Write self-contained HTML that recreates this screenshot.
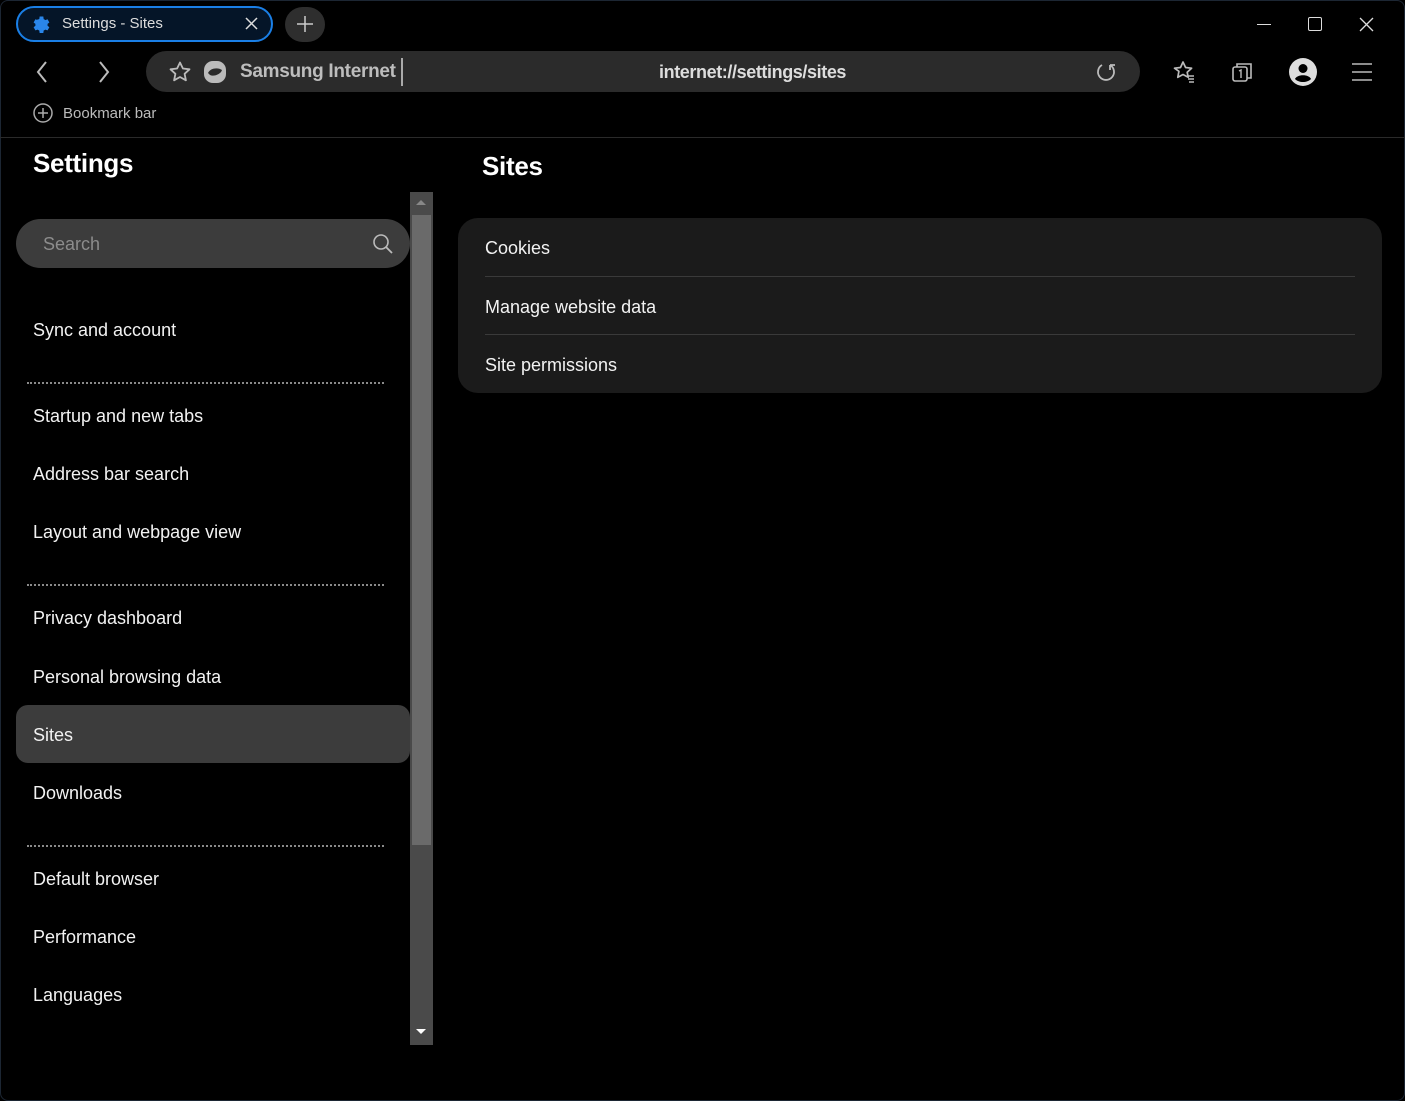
<!DOCTYPE html>
<html><head><meta charset="utf-8"><style>
*{margin:0;padding:0;box-sizing:border-box}
body{width:1405px;height:1101px;background:#000;overflow:hidden;font-family:"Liberation Sans",sans-serif;color:#fff;position:relative}
.a{position:absolute}
.win{position:absolute;left:0;top:0;width:1405px;height:1101px;border:1px solid #1c2633;border-radius:8px}
.item{position:absolute;left:33px;font-size:18px;color:#f2f2f2;line-height:20px}
.dot{position:absolute;left:27px;width:357px;border-top:2px dotted #8a8a8a}
.ci{position:absolute;left:485px;font-size:18px;color:#f2f2f2}
</style></head><body>
<div class="win"></div>
<!-- tab -->
<div class="a" style="left:16px;top:6px;width:257px;height:36px;border:2px solid #1a7fe6;border-radius:18px;background:#051528"></div>
<svg class="a" style="left:30px;top:14px" width="20" height="20" viewBox="0 0 24 24"><path fill="#2a86ea" d="M12 8a4 4 0 100 8 4 4 0 000-8zm9.4 5.1l2-1.6-2-3.5-2.4.9a8 8 0 00-1.8-1L16.8 5h-4l-.4 2.9a8 8 0 00-1.8 1l-2.4-.9-2 3.5 2 1.6a8 8 0 000 2l-2 1.6 2 3.5 2.4-.9a8 8 0 001.8 1l.4 2.7h4l.4-2.7a8 8 0 001.8-1l2.4.9 2-3.5-2-1.6a8 8 0 000-2z" transform="translate(-2.5 -2.5) scale(1.1)"/></svg>
<div class="a" style="left:62px;top:15px;font-size:15px;color:#ddd">Settings - Sites</div>
<svg class="a" style="left:245px;top:17px" width="13" height="13"><path d="M1 1L12 12M12 1L1 12" stroke="#ddd" stroke-width="1.5"/></svg>
<div class="a" style="left:285px;top:7px;width:40px;height:35px;border-radius:18px;background:#2e2e2e"></div>
<svg class="a" style="left:297px;top:16px" width="16" height="16"><path d="M8 0v16M0 8h16" stroke="#ccc" stroke-width="1.5"/></svg>
<!-- window controls -->
<div class="a" style="left:1257px;top:24px;width:14px;border-top:1px solid #ddd"></div>
<div class="a" style="left:1308px;top:17px;width:14px;height:14px;border:1.5px solid #ddd;border-radius:2px"></div>
<svg class="a" style="left:1359px;top:17px" width="15" height="15"><path d="M1 1L14 14M14 1L1 14" stroke="#ddd" stroke-width="1.3"/></svg>
<!-- nav -->
<svg class="a" style="left:34px;top:60px" width="16" height="24"><path d="M12 2L4 12l8 10" stroke="#bbb" fill="none" stroke-width="2"/></svg>
<svg class="a" style="left:96px;top:60px" width="16" height="24"><path d="M4 2l8 10-8 10" stroke="#bbb" fill="none" stroke-width="2"/></svg>
<div class="a" style="left:146px;top:51px;width:994px;height:41px;border-radius:21px;background:#2b2b2b"></div>
<svg class="a" style="left:168px;top:60px" width="24" height="24" viewBox="0 0 24 24"><path d="M12 2.5l2.9 6 6.6.8-4.9 4.5 1.3 6.5L12 17l-5.9 3.3 1.3-6.5L2.5 9.3l6.6-.8z" fill="none" stroke="#bbb" stroke-width="1.8" stroke-linejoin="round"/></svg>
<svg class="a" style="left:203px;top:60px" width="24" height="24" viewBox="0 0 24 24"><rect x="1" y="1" width="22" height="22" rx="9" fill="#bbb"/><path d="M5 13c2-5 10-6 14-3-1 4-8 7-12 5" fill="#2b2b2b"/></svg>
<div class="a" style="left:240px;top:61px;font-size:19px;color:#bdbdbd;font-weight:bold;letter-spacing:-0.3px">Samsung Internet</div>
<div class="a" style="left:401px;top:58px;height:28px;border-left:2px solid #aaa"></div>
<div class="a" style="left:659px;top:62px;font-size:18px;color:#ddd;font-weight:bold;letter-spacing:-0.4px">internet://settings/sites</div>
<svg class="a" style="left:1094px;top:60px" width="24" height="24" viewBox="0 0 24 24"><path d="M8 5a8 8 0 1 0 8 0M16 5V10M16 5h5" fill="none" stroke="#bbb" stroke-width="1.8"/></svg>
<svg class="a" style="left:1171px;top:59px" width="26" height="26" viewBox="0 0 26 26"><path d="M12 3l2.6 5.5 6 .7-4.4 4.1 1 5-5.2-2.8-5.2 2.8 1.1-6L3.5 9.2l6-.7z" fill="none" stroke="#bbb" stroke-width="1.7" stroke-linejoin="round"/><path d="M16 17h7M17 20h6M18 23h5" stroke="#bbb" stroke-width="1.6"/></svg>
<svg class="a" style="left:1231px;top:60px" width="24" height="24" viewBox="0 0 24 24"><rect x="2" y="7" width="14" height="14" rx="2" fill="none" stroke="#bbb" stroke-width="1.6"/><path d="M6 7V4h14v14h-4" fill="none" stroke="#bbb" stroke-width="1.6"/><path d="M8 11l2-1v8" stroke="#bbb" stroke-width="1.4" fill="none"/></svg>
<svg class="a" style="left:1289px;top:58px" width="28" height="28" viewBox="0 0 28 28"><circle cx="14" cy="14" r="14" fill="#ddd"/><circle cx="14" cy="10.5" r="4.5" fill="#000"/><path d="M6 21c2-5 14-5 16 0c-2 2-5 3-8 3s-6-1-8-3z" fill="#000"/></svg>
<svg class="a" style="left:1352px;top:62px" width="20" height="20"><path d="M0 2h20M0 10h20M0 18h20" stroke="#bbb" stroke-width="1.6"/></svg>
<!-- bookmark -->
<svg class="a" style="left:33px;top:103px" width="20" height="20"><circle cx="10" cy="10" r="9" fill="none" stroke="#aaa" stroke-width="1.5"/><path d="M10 5v10M5 10h10" stroke="#aaa" stroke-width="1.5"/></svg>
<div class="a" style="left:63px;top:105px;font-size:15px;color:#bbb">Bookmark bar</div>
<div class="a" style="left:0;top:137px;width:1405px;border-top:1px solid #2a2a2a"></div>
<!-- sidebar -->
<div class="a" style="left:33px;top:148px;font-size:26px;font-weight:bold;letter-spacing:-0.3px">Settings</div>
<div class="a" style="left:16px;top:219px;width:394px;height:49px;border-radius:25px;background:#3c3c3c"></div>
<div class="a" style="left:43px;top:234px;font-size:18px;color:#8c8c8c">Search</div>
<svg class="a" style="left:372px;top:233px" width="22" height="22"><circle cx="9" cy="9" r="7" fill="none" stroke="#bbb" stroke-width="1.6"/><path d="M14 14l6 6" stroke="#bbb" stroke-width="1.8"/></svg>
<div class="a" style="left:410px;top:192px;width:23px;height:853px;background:#4a4a4a"></div>
<div class="a" style="left:412px;top:215px;width:19px;height:630px;background:#6a6a6a"></div>
<div class="a" style="left:416px;top:200px;border:5px solid transparent;border-bottom:5px solid #888;border-top:0"></div>
<div class="a" style="left:416px;top:1029px;border:5px solid transparent;border-top:5px solid #fff;border-bottom:0"></div>
<div class="item" style="top:320px">Sync and account</div>
<div class="dot" style="top:382px"></div>
<div class="item" style="top:406px">Startup and new tabs</div>
<div class="item" style="top:464px">Address bar search</div>
<div class="item" style="top:522px">Layout and webpage view</div>
<div class="dot" style="top:584px"></div>
<div class="item" style="top:608px">Privacy dashboard</div>
<div class="item" style="top:667px">Personal browsing data</div>
<div class="a" style="left:16px;top:705px;width:394px;height:58px;border-radius:12px;background:#3c3c3c"></div>
<div class="item" style="top:725px">Sites</div>
<div class="item" style="top:783px">Downloads</div>
<div class="dot" style="top:845px"></div>
<div class="item" style="top:869px">Default browser</div>
<div class="item" style="top:927px">Performance</div>
<div class="item" style="top:985px">Languages</div>
<!-- content -->
<div class="a" style="left:482px;top:151px;font-size:26px;font-weight:bold;letter-spacing:-0.3px">Sites</div>
<div class="a" style="left:458px;top:218px;width:924px;height:175px;border-radius:20px;background:#1b1b1b"></div>
<div class="ci" style="top:238px">Cookies</div>
<div class="a" style="left:485px;top:276px;width:870px;border-top:1px solid #3a3a3a"></div>
<div class="ci" style="top:297px">Manage website data</div>
<div class="a" style="left:485px;top:334px;width:870px;border-top:1px solid #3a3a3a"></div>
<div class="ci" style="top:355px">Site permissions</div>
</body></html>
